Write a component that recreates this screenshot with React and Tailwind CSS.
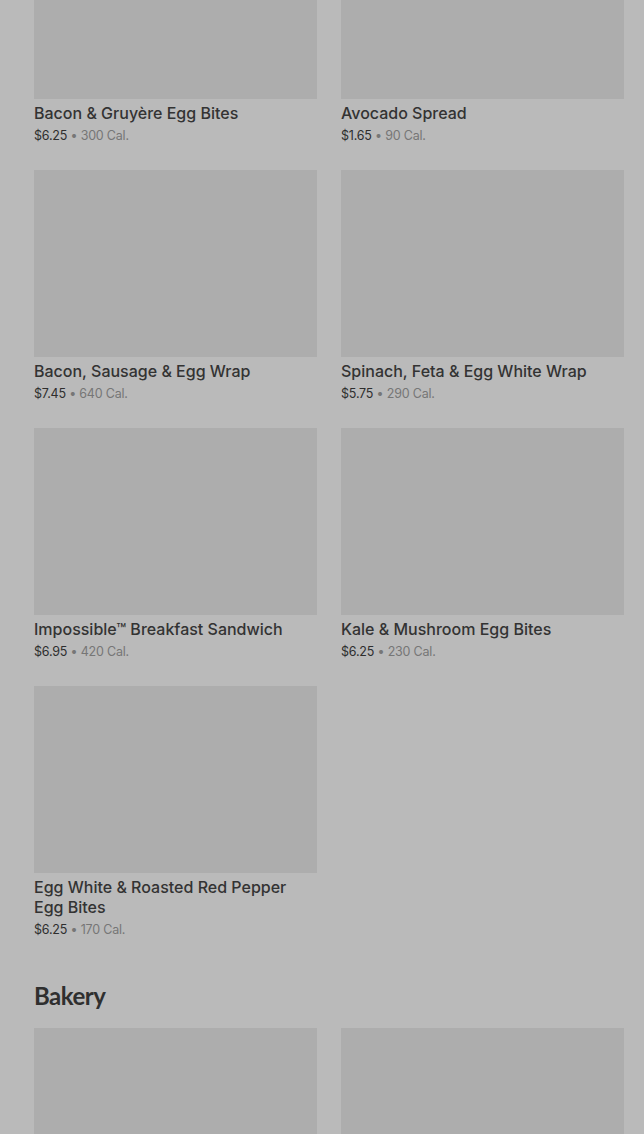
const breakfast = [
    { name: "Bacon & Gruyère Egg Bites", price: "$6.25", cal: "300 Cal." },
    { name: "Avocado Spread", price: "$1.65", cal: "90 Cal." },
    { name: "Bacon, Sausage & Egg Wrap", price: "$7.45", cal: "640 Cal." },
    { name: "Spinach, Feta & Egg White Wrap", price: "$5.75", cal: "290 Cal." },
    { name: "Impossible™ Breakfast Sandwich", price: "$6.95", cal: "420 Cal." },
    { name: "Kale & Mushroom Egg Bites", price: "$6.25", cal: "230 Cal." },
    { name: "Egg White & Roasted Red Pepper Egg Bites", price: "$6.25", cal: "170 Cal." },
]

function MenuItem({ item }) {
    return (
        <div className="flex flex-col">
            <div className="h-[187px] bg-[#adadad]" />
            <div className="mt-1 text-[16px] leading-5 font-medium text-[#333333] pr-6">{item.name}</div>
            <div className="mt-1 text-[12.5px] leading-[18px] tracking-[-0.2px]">
                <span className="text-[#2e2e2e]">{item.price}</span>
                <span className="text-[#767676]"> • {item.cal}</span>
            </div>
        </div>
    )
}

export default function App() {
    return (
        <div className="h-[1134px] bg-[#bababa] overflow-hidden" style={{ fontFamily: "Inter, Roboto, 'Liberation Sans', sans-serif" }}>
            <div className="pl-[34px] pr-5 -mt-[88px]">

                {/* Breakfast grid */}
                <div className="grid grid-cols-2 gap-x-6 gap-y-[25px]">
                    {breakfast.map((item, i) => (
                        <MenuItem key={i} item={item} />
                    ))}
                </div>

                {/* Bakery section */}
                <h2 className="mt-[41px] mb-4 text-[24px] leading-8 font-bold text-[#2f2f2f] tracking-[-0.5px]" style={{ fontFamily: "Lato, sans-serif" }}>
                    Bakery
                </h2>
                <div className="grid grid-cols-2 gap-x-6">
                    <div className="h-[187px] bg-[#adadad]" />
                    <div className="h-[187px] bg-[#adadad]" />
                </div>

            </div>
        </div>
    )
}
